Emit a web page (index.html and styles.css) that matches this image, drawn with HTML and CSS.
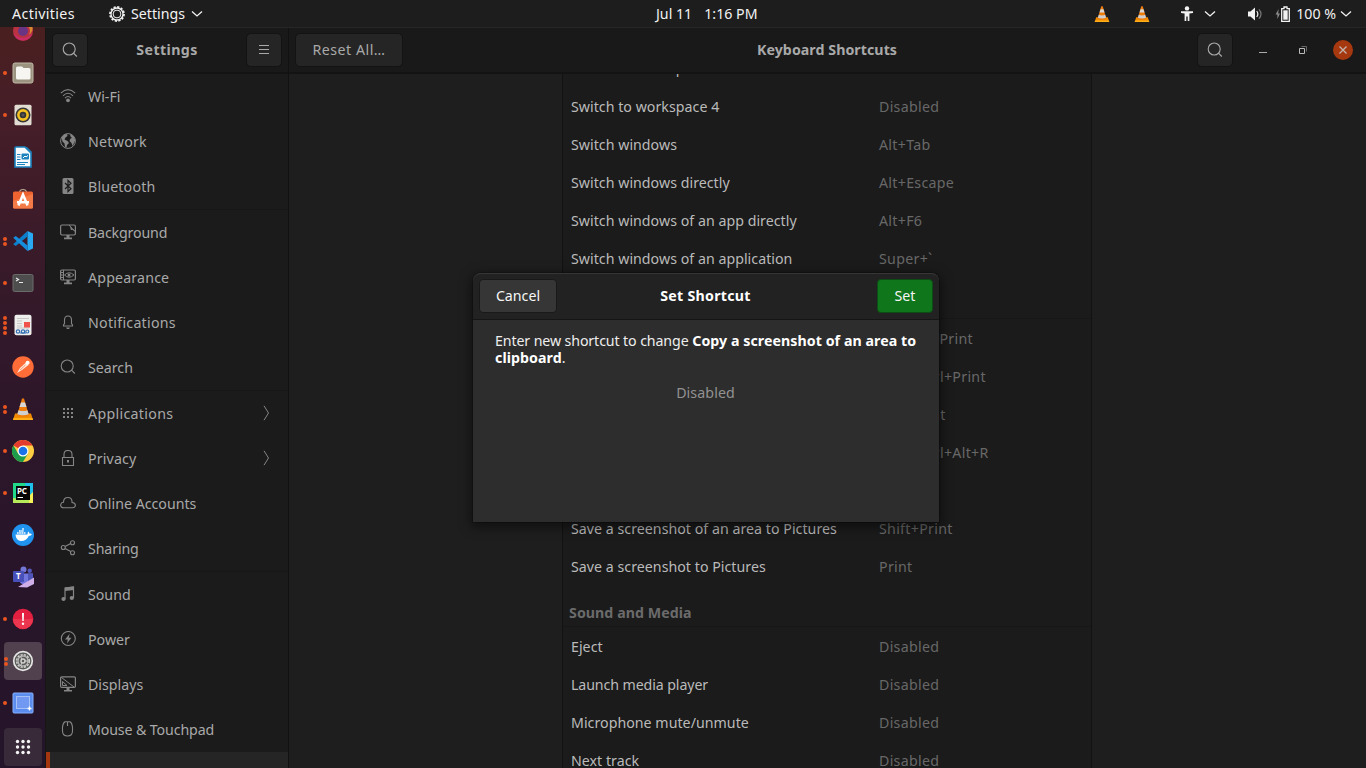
FILE: index.html
```html
<!DOCTYPE html>
<html lang="en">
<head>
<meta charset="utf-8">
<title>Settings</title>
<link rel="stylesheet" href="styles.css">
</head>
<body>
<svg class="defs" width="0" height="0">
  <defs>
    <symbol id="search" viewBox="0 0 16 16"><circle cx="7.2" cy="7" r="6" fill="none" stroke="currentColor" stroke-width="1.1"/><path d="M11.5 11.2 14.8 14.5" stroke="currentColor" stroke-width="1.2"/></symbol>
    <symbol id="down" viewBox="0 0 12 8"><path d="M1 1.5 6 6 11 1.5" fill="none" stroke="currentColor" stroke-width="1.3"/></symbol>
    <symbol id="cone" viewBox="0 0 22 22"><path d="M3 15.5H19L21 22H1Z" fill="#f08a00"/><path d="M1.5 20H20.5L21 22H1Z" fill="#ffae16"/><path d="M10 0.5H12L17 17.5Q11 20 5 17.5Z" fill="#ef7d0c"/><path d="M9 4.5H13L14.5 9H7.5Z" fill="#d8d8d8"/><path d="M6.5 12.2Q11 14 15.4 12.2L16.7 16.2Q11 18.4 5.3 16.2Z" fill="#cfcfcf"/></symbol>
  </defs>
</svg>
<div class="desktop">
  <header class="panel">
    <span class="activities">Activities</span>
    <span class="appmenu">
      <svg width="16" height="16" viewBox="0 0 16 16" fill="none" stroke="#f0f0f0"><circle cx="8" cy="8" r="7" stroke-width="1.8" stroke-dasharray="2.2 1.46"/><circle cx="8" cy="8" r="6" stroke-width="1.3"/><circle cx="8" cy="8" r="3.9" stroke-width="1"/></svg>
      <span class="appname">Settings</span>
      <svg width="12" height="8"><use href="#down"/></svg>
    </span>
    <span class="clock"><span>Jul 11</span><span>1:16 PM</span></span>
    <span class="tray">
      <svg class="cone1" width="16" height="16"><use href="#cone"/></svg>
      <svg class="cone2" width="16" height="16"><use href="#cone"/></svg>
      <svg class="a11y" width="14" height="16" viewBox="0 0 14 16" fill="#f2f2f2"><circle cx="7" cy="2.4" r="2.2"/><path d="M1 5.3H13V7L9.4 7.6V15H7.7V10.5H6.3V15H4.6V7.6L1 7Z"/></svg>
      <svg class="chev1" width="12" height="8"><use href="#down"/></svg>
      <svg class="volume" width="16" height="16" viewBox="0 0 16 16"><path d="M1 5.5H3.5L8 1.5V14.5L3.5 10.5H1Z" fill="#f2f2f2"/><path d="M9.7 5Q12 8 9.7 11" fill="none" stroke="#eee" stroke-width="1.2"/><path d="M12 3.3Q16 8 12 12.7" fill="none" stroke="#777" stroke-width="1.2"/></svg>
      <svg class="battery" width="15" height="16" viewBox="0 0 15 16"><path d="M3.6 3 .6 8.6H2.4V13L5 7.4H3.2Z" fill="#8d8d8d"/><path d="M6.7 2.7H9V1H12V2.7H14.3V15.3H6.7Z" fill="none" stroke="#f2f2f2" stroke-width="1.3"/><path d="M8.3 4.3H12.7V13.7H8.3Z" fill="#f2f2f2"/></svg>
      <span class="percent">100 %</span>
      <svg width="12" height="8"><use href="#down"/></svg>
    </span>
  </header>

  <div class="body">
    <nav class="dock">
      <div class="app firefox"><svg width="22" height="22" viewBox="0 0 22 22"><circle cx="11" cy="11" r="10" fill="#b83240"/><path d="M1.3 13A10 10 0 0 0 20.7 13Q11 23 1.3 13Z" fill="#c92c66"/><circle cx="11" cy="11" r="5" fill="#6a3484"/><path d="M14 5Q20 8 17 15Q22 11 20 5Z" fill="#d98a30"/></svg></div>
      <div class="app"><i class="dots"><b></b></i><svg width="22" height="22" viewBox="0 0 22 22"><rect x="1" y="1" width="20" height="20" rx="2" fill="#9b937f" stroke="#c0b9a8"/><path d="M4 6Q4 4.5 5.5 4.5H10L11.5 6H17Q18.5 6 18.5 7.5V16Q18.5 17.5 17 17.5H5.500Q4 17.500 4 16Z" fill="#f6f5f2"/></svg></div>
      <div class="app"><i class="dots"><b></b></i><svg width="22" height="22" viewBox="0 0 22 22"><rect x="2.500" y=".7" width="17" height="20.600" rx="1.500" fill="#e2ddd3"/><circle cx="11" cy="11" r="7.500" fill="#363636"/><circle cx="11" cy="11" r="4.600" fill="none" stroke="#f4c120" stroke-width="2.600"/><circle cx="11" cy="11" r="1.500" fill="#555"/></svg></div>
      <div class="app"><svg width="22" height="22" viewBox="0 0 22 22"><path d="M4 1H13L19 7V21H3V2Q3 1 4 1Z" fill="#f6fafc" stroke="#1b82be" stroke-width="1.600"/><path d="M12.500 1H15L19.500 5.500V8Z" fill="#1b82be"/><path d="M5 8.500H8.500M5 11H8.500M5 13.500H8.500M5 16.500H16M5 18.500H13" stroke="#1b82be"/><rect x="9.500" y="7.500" width="7.500" height="6" rx="1" fill="#1b82be"/><path d="M11 12 13 10 14 11 16 9.500" stroke="#fff" fill="none"/></svg></div>
      <div class="app"><svg width="22" height="22" viewBox="0 0 22 22"><path d="M7.500 5Q7.500 1.500 11 1.500T14.500 5" fill="none" stroke="#b9a891" stroke-width="1.200"/><rect x="1" y="3.500" width="20" height="17" rx="1.500" fill="#ee6330"/><path d="M1 13 21 6V19Q21 20.500 19.500 20.500H2.500Q1 20.500 1 19Z" fill="#f47b48"/><path d="M6.500 17.500 11 6.500 15.500 17.500M5 14.200H17" fill="none" stroke="#fff" stroke-width="2.500"/></svg></div>
      <div class="app"><i class="dots"><b></b><b></b></i><svg width="22" height="22" viewBox="0 0 22 22"><path d="M15.500 1 21 3.500V18.500L15.500 21Z" fill="#29a9f2"/><path d="M15.500 1V6.500L3.800 16 1.200 14.200Z" fill="#0b7fcb"/><path d="M15.500 21V15.500L3.800 6.000 1.200 7.800Z" fill="#168ede"/></svg></div>
      <div class="app"><i class="dots"><b></b></i><svg width="22" height="22" viewBox="0 0 22 22"><rect x="1" y="2.500" width="20" height="17" rx="1.500" fill="#4c4d4c" stroke="#6b6c6a"/><path d="M4 6 6.500 7.500 4 9M7 10.500H11" fill="none" stroke="#e8e8e8" stroke-width="1.200"/></svg></div>
      <div class="app"><i class="dots"><b></b><b></b><b></b><b></b></i><svg width="22" height="22" viewBox="0 0 22 22"><rect x="2.500" y=".8" width="17" height="20.500" rx="2" fill="#eeeeed"/><path d="M5 4.500H17M5 7H10M5 9.500H10M5 12H10M5 14H17" stroke="#c7c7c7"/><rect x="12" y="8" width="6" height="5.500" fill="#ee524b"/><circle cx="6" cy="17.500" r="1.700" fill="none" stroke="#3470b5" stroke-width="1.200"/><circle cx="11" cy="17.500" r="1.700" fill="none" stroke="#3470b5" stroke-width="1.200"/><circle cx="15.300" cy="17.500" r="1.500" fill="none" stroke="#3470b5" stroke-width="1.200"/><path d="M8 19H14" stroke="#3470b5" fill="none"/></svg></div>
      <div class="app"><svg width="22" height="22" viewBox="0 0 22 22"><circle cx="11" cy="11" r="10.700" fill="#ff6c37"/><path d="M5 17 8 12 14 6.500 16.500 9 10 14Z" fill="#fde9dd"/><circle cx="15.600" cy="6.800" r="2" fill="#fff"/><path d="M8 14 13.500 9" stroke="#ff6c37" stroke-width=".7"/></svg></div>
      <div class="app"><i class="dots"><b></b><b></b></i><svg width="22" height="22"><use href="#cone"/></svg></div>
      <div class="app"><i class="dots"><b></b></i><svg width="22" height="22" viewBox="0 0 22 22"><circle cx="11" cy="11" r="11" fill="#ffcd41"/><path d="M11 11 1.470 5.500A11 11 0 0 1 20.530 5.500H11Z" fill="#e33b2e"/><path d="M1.470 5.500A11 11 0 0 0 11 22L15.800 13.700 11 11 6.200 13.700Z" fill="#1d9c4c"/><circle cx="11" cy="11" r="5.500" fill="#fff"/><circle cx="11" cy="11" r="4.300" fill="#1a73e8"/></svg></div>
      <div class="app"><i class="dots"><b></b></i><svg width="22" height="22" viewBox="0 0 22 22"><rect x="1" y="1" width="20" height="20" fill="#21d789"/><path d="M13 1H21V12L16 18Z" fill="#1cc0e8"/><path d="M21 10V21H10Z" fill="#f4f05a"/><path d="M1 16V21H17V18Z" fill="#b7ea5b"/><rect x="4" y="4" width="14" height="14" fill="#050505"/><path d="M5.500 15.500H11" stroke="#fff"/><text class="pc" x="4.900" y="11.800">PC</text></svg></div>
      <div class="app"><svg width="22" height="22" viewBox="0 0 22 22"><circle cx="11" cy="11" r="11" fill="#1f93ee"/><path d="M3.500 10.500H15.500Q15.500 8.500 16.200 7.600 17.500 8.500 17.500 9.700 18.700 9.400 20 10.200 19 12 16.800 12 14.500 17 9 17 4 17 3.500 10.500Z" fill="#fff"/><path d="M5 9H14M7 7H12M10.200 5H12" stroke="#fff" stroke-width="1.500" stroke-dasharray="1.700 .5"/></svg></div>
      <div class="app"><svg width="22" height="22" viewBox="0 0 22 22"><circle cx="11.500" cy="3.500" r="3" fill="#7377d6"/><circle cx="17.700" cy="4.700" r="2.200" fill="#5358be"/><path d="M7 7.500H21V14Q20 18 13 19 7 18 7 13Z" fill="#7177dc"/><path d="M16 7.500H21V14L16 16Z" fill="#4e54b8"/><rect x="1" y="5" width="11" height="11" rx="1" fill="#474fb8"/><path d="M6 21 22 11.500V18L15 21.500Z" fill="#d0aee8"/><text class="tee" x="4" y="13.300">T</text></svg></div>
      <div class="app"><i class="dots"><b></b></i><svg width="22" height="22" viewBox="0 0 22 22"><circle cx="11" cy="11" r="10.300" fill="#e3203f"/><path d="M1 11A10 10 0 0 0 21 11Z" fill="#ec3650"/><path d="M10 5H12L11.700 13H10.300Z" fill="#fff"/><circle cx="11" cy="15.800" r="1.200" fill="#fff"/></svg></div>
      <div class="app active"><i class="dots"><b></b><b></b></i><svg width="22" height="22" viewBox="0 0 22 22" fill="none"><circle cx="11" cy="11" r="9.300" fill="#5b5b5b" stroke="#e4e4e2" stroke-width="1.700"/><circle cx="11" cy="11" r="6.300" stroke="#d0d0ce" stroke-width="1.600" stroke-dasharray="2.200 1.100"/><circle cx="11" cy="11" r="5" stroke="#d0d0ce"/><circle cx="11" cy="11" r="2" stroke="#d0d0ce" stroke-width="1.500"/><path d="M13 11H16M10 13 8.500 15.500M10 9 8.500 6.500" stroke="#d0d0ce"/></svg></div>
      <div class="app"><i class="dots"><b></b></i><svg width="22" height="22" viewBox="0 0 22 22"><rect x="1" y="1" width="20" height="20" rx="1" fill="#5b8def" stroke="#85b0ff"/><rect x="4.500" y="4.500" width="13" height="12" fill="#7299f2" stroke="#e6eeff" stroke-dasharray="1 1"/><path d="M17.500 14.500V18.500M15.500 16.500H19.500" stroke="#fff" stroke-width="1.300"/></svg></div>
      <div class="app grid"><svg width="16" height="16" viewBox="0 0 16 16" fill="#f4f4f4"><circle cx="2.500" cy="2.500" r="1.700"/><circle cx="8" cy="2.500" r="1.700"/><circle cx="13.500" cy="2.500" r="1.700"/><circle cx="2.500" cy="8" r="1.700"/><circle cx="8" cy="8" r="1.700"/><circle cx="13.500" cy="8" r="1.700"/><circle cx="2.500" cy="13.500" r="1.700"/><circle cx="8" cy="13.500" r="1.700"/><circle cx="13.500" cy="13.500" r="1.700"/></svg></div>
    </nav>

    <main class="window">
      <aside class="side">
        <div class="titlebar">
          <button class="btn icon"><svg width="16" height="16"><use href="#search"/></svg></button>
          <h1 class="side-title">Settings</h1>
          <button class="btn icon"><svg width="12" height="12" viewBox="0 0 12 12" stroke="currentColor"><path d="M1 1.500H11M1 5.500H11M1 9.500H11"/></svg></button>
        </div>
        <ul class="menu">
          <li><svg width="16" height="16" viewBox="0 0 16 16" fill="none" stroke="currentColor" stroke-width="1.100"><path d="M.8 5.200Q8-1.800 15.200 5.200M3 7.800Q8 2.800 13 7.800M5 10.100Q8 7 11 10.100"/><circle cx="8" cy="12.300" r="1.900" fill="currentColor" stroke="none"/></svg><span class="t1">Wi-Fi</span></li>
          <li><svg width="16" height="16" viewBox="0 0 16 16"><circle cx="8" cy="8" r="7.400" fill="none" stroke="currentColor"/><path d="M1.500 4.500 4 1.500 7 1 7.500 3 5.500 4.500 4.500 6.500 7.500 8 9 10 7 12 6.500 14.500 5 14 4.500 10.500 2.500 8.500ZM10 1 13.500 3 15.300 7 14 10 12.500 13 11.500 10 9.500 8 10.500 5.500 12 5 10.500 3.500Z" fill="currentColor"/></svg><span class="t2">Network</span></li>
          <li><svg width="16" height="16" viewBox="0 0 16 16"><rect x="2.500" y="0" width="11" height="16" rx="1.500" fill="currentColor"/><path d="M5 5 11 10.700 8 13.500V2.500L11 5.300 5 11" fill="none" stroke="#1c1c1c" stroke-width="1.200"/></svg><span class="t3">Bluetooth</span></li>
          <li class="sep"><svg width="16" height="16" viewBox="0 0 16 16"><path d="M9 1H2Q.6 1 .6 2.400V9.600Q.6 11 2 11H14Q15.400 11 15.400 9.600V2.400Q15.400 1 14 1H9" fill="none" stroke="currentColor" stroke-width="1.200"/><path d="M9 1 15 7.500Q14 4.500 11 5.500 11.500 2.500 9 1Z" fill="currentColor" stroke="currentColor" stroke-width=".8"/><path d="M6.500 11H9.500V13.500H12V15.200H4V13.500H6.500Z" fill="currentColor"/></svg><span class="t4">Background</span></li>
          <li><svg width="16" height="16" viewBox="0 0 16 16"><rect x=".6" y="1" width="14.800" height="10" rx="1.200" fill="none" stroke="currentColor" stroke-width="1.200"/><path d="M6.500 11H9.500V13.500H12V15.200H4V13.500H6.500Z" fill="currentColor"/><path d="M3.500 1V11M1 3.500H3M1 6H3M1 8.500H3M4.500 6Q9 1.500 14 6 9 10.500 4.500 6Z" fill="none" stroke="currentColor"/><circle cx="9" cy="6" r="1.500" fill="currentColor"/></svg><span class="t5">Appearance</span></li>
          <li><svg width="16" height="16" viewBox="0 0 16 16"><path d="M3.500 12V11L4.500 9.500V6Q4.500 2 8 2T11.500 6V9.500L12.500 11V12Z" fill="none" stroke="currentColor" stroke-width="1.100"/><path d="M8 .5V2M6 13.500H10L9 15H7Z" fill="currentColor"/></svg><span class="t6">Notifications</span></li>
          <li><svg width="16" height="16"><use href="#search"/></svg><span class="t7">Search</span></li>
          <li class="sep"><svg width="16" height="16" viewBox="0 0 16 16" fill="currentColor"><path d="M3 3h2v2H3zM7 3h2v2H7zM11 3h2v2h-2zM3 7h2v2H3zM7 7h2v2H7zM11 7h2v2h-2zM3 11h2v2H3zM7 11h2v2H7zM11 11h2v2h-2z"/></svg><span class="t8">Applications</span><svg class="go" width="7" height="16" viewBox="0 0 7 16" fill="none" stroke="currentColor"><path d="M1 .8 5.500 8 1 15.200"/></svg></li>
          <li><svg width="16" height="16" viewBox="0 0 16 16" fill="none" stroke="currentColor" stroke-width="1.100"><path d="M2.500 7.500H13.500V15.500H2.500ZM4 7.500V4.500Q4 .5 8 .5T12 4.500V7.500"/><path d="M8 10V12.500" stroke-width="2"/></svg><span class="t9">Privacy</span><svg class="go" width="7" height="16" viewBox="0 0 7 16" fill="none" stroke="currentColor"><path d="M1 .8 5.500 8 1 15.200"/></svg></li>
          <li><svg width="16" height="16" viewBox="0 0 16 16" fill="none" stroke="currentColor" stroke-width="1.100"><path d="M3.800 12.700Q.6 12.700.6 9.800 1 7.500 3.500 7.300 3.500 2.500 8 2.500 11.500 2.500 12 6 12 6.800 12 7.500 15.400 7.800 15.400 10.200 15.200 12.700 12.500 12.700Z"/></svg><span class="t10">Online Accounts</span></li>
          <li><svg width="16" height="16" viewBox="0 0 16 16" fill="none" stroke="currentColor" stroke-width="1.100"><circle cx="3.300" cy="7.500" r="2"/><circle cx="12.500" cy="2.700" r="2"/><circle cx="12.500" cy="12.700" r="2"/><path d="M5 6.500 10.700 3.600M5 8.500 10.800 11.600"/></svg><span class="t11">Sharing</span></li>
          <li class="sep"><svg width="16" height="16" viewBox="0 0 16 16"><path d="M5 13V2L13.500 1V12" fill="none" stroke="currentColor" stroke-width="1.200"/><path d="M5 1.500 14 .5V4L5 5Z" fill="currentColor"/><circle cx="3.500" cy="13" r="2.100" fill="currentColor"/><circle cx="11.800" cy="12" r="2.100" fill="currentColor"/></svg><span class="t12">Sound</span></li>
          <li><svg width="16" height="16" viewBox="0 0 16 16"><circle cx="8.300" cy="7.500" r="7" fill="none" stroke="currentColor" stroke-width="1.100"/><path d="M9.700 2.700 5 8.500H7.800L7 12.500 11.500 6.700H8.800Z" fill="currentColor"/></svg><span class="t13">Power</span></li>
          <li><svg width="16" height="16" viewBox="0 0 16 16"><rect x=".6" y=".8" width="14.800" height="10.600" rx="1.200" fill="none" stroke="currentColor" stroke-width="1.200"/><path d="M6.500 12H9.500V14H12V15.500H4V14H6.500Z" fill="currentColor"/><path d="M2.500 9.500V5.500L7 9.500ZM1.500 1.500 14 11" fill="none" stroke="currentColor"/></svg><span class="t14">Displays</span></li>
          <li><svg width="16" height="16" viewBox="0 0 16 16" fill="none" stroke="currentColor" stroke-width="1.100"><path d="M5 .8H10Q12 2 12.500 6V10Q12.500 15 7.500 15T2.500 10V6Q3 2 5 .8ZM7.500 1V5"/></svg><span class="t15">Mouse &amp; Touchpad</span></li>
          <li class="current"></li>
        </ul>
      </aside>
      <section class="content">
        <div class="titlebar">
          <button class="btn reset">Reset All…</button>
          <h2 class="page-title">Keyboard Shortcuts</h2>
          <button class="btn icon find"><svg width="16" height="16"><use href="#search"/></svg></button>
          <svg class="min" width="10" height="10" viewBox="0 0 10 10"><path d="M1 7.500H9" stroke="#aaa"/></svg>
          <svg class="max" width="10" height="10" viewBox="0 0 10 10" fill="none"><path d="M3.500 1.500H8.500V6.500" stroke="#666"/><path d="M1.500 3.500H6.500V8.500H1.500Z" stroke="#bbb"/></svg>
          <span class="close"><svg width="10" height="10" viewBox="0 0 10 10"><path d="M1.500 1.500 8.500 8.500M8.500 1.500 1.500 8.500" stroke="#c2b4ae" stroke-width="1.300"/></svg></span>
        </div>
        <div class="viewport">
          <div class="list">
            <div class="row first"><span>Switch to workspace 3</span><em>Disabled</em></div>
            <div class="row"><span>Switch to workspace 4</span><em>Disabled</em></div>
            <div class="row"><span>Switch windows</span><em>Alt+Tab</em></div>
            <div class="row"><span>Switch windows directly</span><em>Alt+Escape</em></div>
            <div class="row"><span>Switch windows of an app directly</span><em>Alt+F6</em></div>
            <div class="row"><span>Switch windows of an application</span><em>Super+`</em></div>
            <div class="group"></div>
            <div class="row"><span></span><em>Ctrl+Alt+Print</em></div>
            <div class="row"><span></span><em>Shift+Ctrl+Print</em></div>
            <div class="row"><span></span><em>Ctrl+Print</em></div>
            <div class="row"><span></span><em>Shift+Ctrl+Alt+R</em></div>
            <div class="row"></div>
            <div class="row"><span>Save a screenshot of an area to Pictures</span><em>Shift+Print</em></div>
            <div class="row"><span>Save a screenshot to Pictures</span><em>Print</em></div>
            <div class="group">Sound and Media</div>
            <div class="row"><span>Eject</span><em>Disabled</em></div>
            <div class="row"><span class="tight">Launch media player</span><em>Disabled</em></div>
            <div class="row"><span>Microphone mute/unmute</span><em>Disabled</em></div>
            <div class="row"><span>Next track</span><em>Disabled</em></div>
          </div>
        </div>
      </section>
    </main>
  </div>

  <div class="dialog">
    <div class="dialog-head">
      <button class="dbtn cancel">Cancel</button>
      <h3>Set Shortcut</h3>
      <button class="dbtn set">Set</button>
    </div>
    <p class="prompt"><span>Enter new shortcut to change</span> <strong>Copy a screenshot of an area to<br>clipboard</strong>.</p>
    <p class="accel">Disabled</p>
  </div>
</div>
</body>
</html>
```
FILE: styles.css
```css
* { box-sizing: border-box; margin: 0; padding: 0; }
body {
  width: 1366px; height: 768px; overflow: hidden;
  background: #1d1d1d; color: #a9a9a9;
  font-family: "Noto Sans", "Open Sans", sans-serif; font-size: 14.2px;
}
button { font: inherit; color: inherit; }
svg { display: block; flex: none; }
.defs { position: absolute; }
.desktop { position: relative; display: flex; flex-direction: column; width: 1366px; height: 768px; overflow: hidden; white-space: nowrap; }

/* top panel */
.panel { display: grid; grid-template-columns: 109px 547px 1fr auto; align-items: center; flex: none; height: 27px; padding-right: 14px; background: #1d1d1d; color: #f2f2f2; }
.activities { padding-left: 12px; letter-spacing: .38px; }
.appmenu { display: flex; align-items: center; gap: 6px; }
.clock { display: flex; gap: 12px; }
.tray { display: flex; align-items: center; }
.cone1 { margin-right: 24px; }
.cone2 { margin-right: 30px; }
.a11y { margin-right: 10px; }
.chev1 { margin-right: 31px; }
.volume { margin-right: 12px; }
.battery { margin-right: 6px; }
.percent { margin-right: 4px; }

.body { display: flex; flex: 1; min-height: 0; }

/* dock */
.dock { width: 45px; flex: none; overflow: hidden; padding-left: 4px; background: linear-gradient(#4a1f1f 0, #451e28 90px, #3d1b29 190px, #33192a 290px, #2d162a 400px, #28152a 540px, #25152a 741px); }
.app { position: relative; display: flex; align-items: center; justify-content: center; width: 38px; height: 38px; margin-bottom: 4px; border-radius: 4px; }
.firefox { margin-top: -15px; }
.app.active { background: #51414f; }
.app.grid { background: #382a39; margin-top: 6px; }
.dots { position: absolute; left: -1px; top: 0; height: 38px; display: flex; flex-direction: column; justify-content: center; gap: 1px; }
.active .dots { left: 0; }
.dots b { width: 4px; height: 4px; border-radius: 2px; background: #e95420; }
.pc { font-size: 8px; font-weight: 700; fill: #fff; }
.tee { font-size: 8px; font-weight: 700; fill: #fff; }

/* window */
.window { display: flex; flex: 1; min-width: 0; border-top: 1px solid #262626; }
.titlebar { display: flex; align-items: center; flex: none; height: 46px; padding: 0 6px; background: #191919; border-bottom: 2px solid #131313; }
.titlebar h1, .titlebar h2 { flex: 1; text-align: center; font-size: 14.2px; font-weight: 700; padding-bottom: 2px; }
.titlebar .side-title { letter-spacing: .4px; }
.titlebar .page-title { padding-left: 54px; letter-spacing: .06px; }
.btn { display: flex; align-items: center; justify-content: center; height: 34px; background: #252525; border: 1px solid #131313; border-radius: 5px; flex: none; }
.btn.icon { width: 36px; }
.side { width: 244px; flex: none; background: #1b1b1b; border-right: 1px solid #111; border-left: 1px solid #161616; display: flex; flex-direction: column; }
.menu { list-style: none; }
.menu li { display: flex; align-items: center; gap: 12px; height: 45px; padding: 0 18px 0 14px; }
.menu li > svg { color: #858585; margin-bottom: 2px; }
.menu .sep { height: 46px; border-top: 1px solid #171717; }
.menu .go { margin-left: auto; }
.menu .current { background: #252525; border-left: 4px solid #a4370f; height: 16px; }
.t2, .t6 { letter-spacing: .27px; }
.t3, .t5, .t9 { letter-spacing: .17px; }
.t4 { letter-spacing: -.15px; }
.t8 { letter-spacing: .32px; }
.t11, .t15 { letter-spacing: -.12px; }

.content { flex: 1; min-width: 0; display: flex; flex-direction: column; }
.content .titlebar { padding-right: 13px; }
.reset { width: 108px; letter-spacing: .5px; padding-bottom: 2px; }
.find { margin-right: 25px; }
.min { margin-right: 30px; }
.max { margin-right: 25px; }
.close { width: 20px; height: 20px; border-radius: 50%; background: #a5380f; display: flex; align-items: center; justify-content: center; }
.viewport { flex: 1; min-height: 0; overflow: hidden; display: flex; justify-content: center; background: #1e1e1e; padding-right: 2px; }
.list { width: 530px; height: 740px; margin-top: -25px; background: #1b1b1b; border: solid #121212; border-width: 0 1px; }
.row { display: grid; grid-template-columns: 308px 1fr; align-items: center; height: 38px; padding-left: 8.5px; color: #bababa; letter-spacing: .03px; }
.row em { font-style: normal; color: #686868; letter-spacing: .3px; }
.row.first { padding-bottom: 2px; }
.row .tight { letter-spacing: -.1px; }
.group { height: 42px; padding: 14px 0 0 6.5px; display: flex; align-items: center; font-weight: 700; color: #6b6b6b; border-bottom: 1px solid #171717; letter-spacing: .06px; }

/* modal */
.dialog { position: absolute; left: 473px; top: 273px; width: 466px; height: 249px; background: #2d2d2d; color: #f5f5f5; border-radius: 8px 8px 0 0; box-shadow: 0 3px 12px 2px rgba(0,0,0,.5), 0 0 0 1px rgba(0,0,0,.2); }
.dialog-head { display: flex; align-items: center; height: 47px; padding: 0 6px; background: #222; border-top: 1px solid #363636; border-bottom: 1px solid #151515; border-radius: 8px 8px 0 0; }
.dialog-head h3 { flex: 1; text-align: center; font-size: 14.2px; color: #fff; padding: 0 23px 2px 0; letter-spacing: .27px; }
.dbtn { height: 34px; border: 1px solid #191919; border-radius: 4px; background: #363636; margin-top: -1px; padding-bottom: 2px; }
.cancel { width: 78px; }
.set { width: 56px; background: #0f761c; border-color: #0c4d15; }
.prompt { padding: 12px 22px 0; line-height: 17px; color: #eee; }
.prompt span { letter-spacing: -.11px; }
.prompt strong { color: #fff; letter-spacing: .06px; }
.accel { text-align: center; margin-top: 17px; color: #929292; letter-spacing: .1px; padding-right: 1px; }
```
